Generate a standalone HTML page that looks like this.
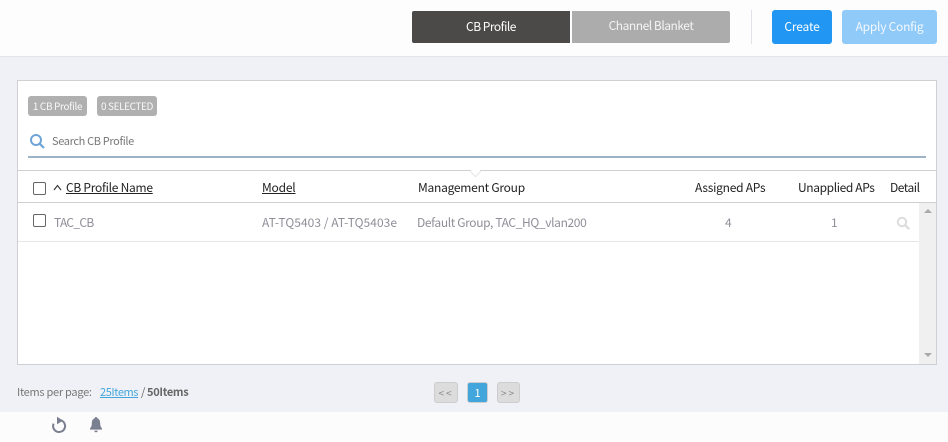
<!DOCTYPE html>
<html><head><meta charset="utf-8">
<style>
html,body{margin:0;padding:0}
body{width:948px;height:442px;position:relative;overflow:hidden;background:#f0f1f6;font-family:"Noto Sans CJK JP","Liberation Sans",sans-serif;font-size:12px}
.a{position:absolute}
.t{position:absolute;white-space:nowrap;line-height:16px;height:16px}
.h{color:#222}
.c{color:#8f8f99}
.cb{position:absolute;box-sizing:border-box;width:13px;height:13px;border:1px solid #666;border-radius:2px;background:#fff}
</style></head><body>
<div class="a" style="left:0;top:0;width:948px;height:57px;box-sizing:border-box;background:#fdfdfd;border-bottom:1px solid #e3e4ea"></div>
<div class="a" style="left:412px;top:11px;width:158px;height:32px;background:#4b4a48;border-radius:2px 0 0 2px"></div>
<div class="a" style="left:572px;top:11px;width:158px;height:32px;background:#acacac;border-radius:0 2px 2px 0"></div>
<div class="t" style="left:412px;top:19px;width:158px;text-align:center;color:#fff;letter-spacing:-.5px">CB Profile</div>
<div class="t" style="left:572px;top:18px;width:158px;text-align:center;color:#f4f4f4;letter-spacing:-.47px">Channel Blanket</div>
<div class="a" style="left:751px;top:10px;width:1px;height:34px;background:#dfe2e8"></div>
<div class="a" style="left:772px;top:10px;width:60px;height:34px;background:#2196f3;border-radius:3px"></div>
<div class="t" style="left:772px;top:19px;width:60px;text-align:center;color:#fff;letter-spacing:-.15px">Create</div>
<div class="a" style="left:842px;top:10px;width:95px;height:34px;background:#90caf9;border-radius:3px"></div>
<div class="t" style="left:842px;top:19px;width:95px;text-align:center;color:#f2f8fe;letter-spacing:-.25px">Apply Config</div>

<div class="a" style="left:17px;top:80px;width:920px;height:285px;box-sizing:border-box;background:#fff;border:1px solid #d0d0d4"></div>
<div class="a" style="left:28px;top:96px;width:59px;height:20px;background:#b0b0b0;border-radius:3px"></div>
<div class="t" style="left:28px;top:98px;width:59px;text-align:center;color:#f8f8f8;font-size:10px;letter-spacing:-.35px">1 CB Profile</div>
<div class="a" style="left:97px;top:96px;width:60px;height:20px;background:#b0b0b0;border-radius:3px"></div>
<div class="t" style="left:97px;top:98px;width:60px;text-align:center;color:#f8f8f8;font-size:10px;letter-spacing:-.4px">0 SELECTED</div>
<svg class="a" style="left:29px;top:133px" width="17" height="17" viewBox="0 0 17 17"><circle cx="7" cy="7" r="5" fill="none" stroke="#6fa5d6" stroke-width="2"/><path d="M10.8 10.8L15 15" stroke="#6fa5d6" stroke-width="2.2"/></svg>
<div class="t" style="left:52px;top:133px;color:#777;font-size:11px;letter-spacing:-.35px">Search CB Profile</div>
<div class="a" style="left:28px;top:156px;width:898px;height:2px;background:#9db4c8"></div>

<div class="a" style="left:18px;top:170px;width:918px;height:1px;background:#d0d0d4"></div>
<div class="a" style="left:470px;top:166px;width:11px;height:11px;background:#fff;border-right:1px solid #dcdcdc;border-bottom:1px solid #dcdcdc;box-sizing:border-box;transform:rotate(45deg) scale(.72)"></div>
<div class="a" style="left:18px;top:202px;width:918px;height:1px;background:#d0d0d4"></div>
<div class="a" style="left:18px;top:241px;width:901px;height:1px;background:#e6e6e9"></div>

<div class="cb" style="left:33px;top:182px"></div>
<svg class="a" style="left:53px;top:184px" width="9" height="7" viewBox="0 0 9 7"><path d="M1 6L4.5 1.5L8 6" fill="none" stroke="#333" stroke-width="1.1"/></svg>
<div class="t h" style="left:66px;top:180px;text-decoration:underline;letter-spacing:-.27px">CB Profile Name</div>
<div class="t h" style="left:262px;top:180px;text-decoration:underline;letter-spacing:-.2px">Model</div>
<div class="t h" style="left:418px;top:180px;letter-spacing:-.25px">Management Group</div>
<div class="t h" style="left:695px;top:180px;letter-spacing:-.25px">Assigned APs</div>
<div class="t h" style="left:798px;top:180px;letter-spacing:-.38px">Unapplied APs</div>
<div class="t h" style="left:890px;top:180px;letter-spacing:-.5px">Detail</div>

<div class="cb" style="left:33px;top:214px"></div>
<div class="t c" style="left:54px;top:215px;letter-spacing:-.7px">TAC_CB</div>
<div class="t c" style="left:262px;top:215px;letter-spacing:.04px">AT-TQ5403 / AT-TQ5403e</div>
<div class="t c" style="left:417px;top:215px;letter-spacing:-.37px">Default Group, TAC_HQ_vlan200</div>
<div class="t c" style="left:725px;top:215px">4</div>
<div class="t c" style="left:831px;top:215px">1</div>
<svg class="a" style="left:896px;top:216px" width="15" height="15" viewBox="0 0 15 15"><circle cx="6" cy="6" r="4.2" fill="none" stroke="#dcdcdc" stroke-width="2"/><path d="M9.3 9.3L13.2 13.2" stroke="#dcdcdc" stroke-width="2.4"/></svg>

<div class="a" style="left:919px;top:203px;width:17px;height:161px;background:#f0f0f0"></div>
<div class="a" style="left:924px;top:209px;width:0;height:0;border-left:4px solid transparent;border-right:4px solid transparent;border-bottom:4px solid #aaa"></div>
<div class="a" style="left:924px;top:353px;width:0;height:0;border-left:4px solid transparent;border-right:4px solid transparent;border-top:4px solid #aaa"></div>

<div class="t" style="left:17px;top:384px;color:#777;font-size:11px;letter-spacing:-.27px">Items per page:</div>
<div class="t" style="left:100px;top:384px;color:#42a5dc;font-size:11px;text-decoration:underline;letter-spacing:-.4px">25Items</div>
<div class="t" style="left:141px;top:384px;color:#666;font-size:11px">/</div>
<div class="t" style="left:147px;top:384px;color:#666;font-size:11px;font-weight:700;letter-spacing:-.3px">50Items</div>

<div class="a" style="left:434px;top:382px;width:24px;height:21px;box-sizing:border-box;background:#dcdcdc;border:1px solid #cdcdcd;border-radius:3px"></div>
<div class="t" style="left:434px;top:385px;width:24px;text-align:center;color:#888;font-size:10px;letter-spacing:2px">&lt;&lt;</div>
<div class="a" style="left:467px;top:382px;width:21px;height:21px;box-sizing:border-box;background:#42a5dc;border:1px solid #cdcdcd;border-radius:3px"></div>
<div class="t" style="left:467px;top:385px;width:21px;text-align:center;color:#fff;font-size:11px">1</div>
<div class="a" style="left:497px;top:382px;width:23px;height:21px;box-sizing:border-box;background:#dcdcdc;border:1px solid #cdcdcd;border-radius:3px"></div>
<div class="t" style="left:497px;top:385px;width:23px;text-align:center;color:#888;font-size:10px;letter-spacing:2px">&gt;&gt;</div>

<div class="a" style="left:0;top:412px;width:948px;height:30px;background:#fcfcfc"></div>
<svg class="a" style="left:50px;top:416px" width="18" height="18" viewBox="0 0 18 18"><path d="M3.6 7.6A6 6 0 1 0 10.5 4.2" fill="none" stroke="#7b8090" stroke-width="2"/><path d="M7 .8L13.2 4.6L7 8.2Z" fill="#7b8090"/></svg>
<svg class="a" style="left:88px;top:416px" width="16" height="18" viewBox="0 0 16 18"><path d="M8 1C9 1 9.3 1.6 9.4 2.4C11.6 3.2 12.2 5.2 12.2 7.5C12.2 10 13 11.2 14 12.5V13.6H2V12.5C3 11.2 3.8 10 3.8 7.5C3.8 5.2 4.4 3.2 6.6 2.4C6.7 1.6 7 1 8 1Z" fill="#7b8090"/><path d="M6.2 14.6H9.8C9.6 15.8 8.9 16.3 8 16.3C7.1 16.3 6.4 15.8 6.2 14.6Z" fill="#7b8090"/></svg>
</body></html>
